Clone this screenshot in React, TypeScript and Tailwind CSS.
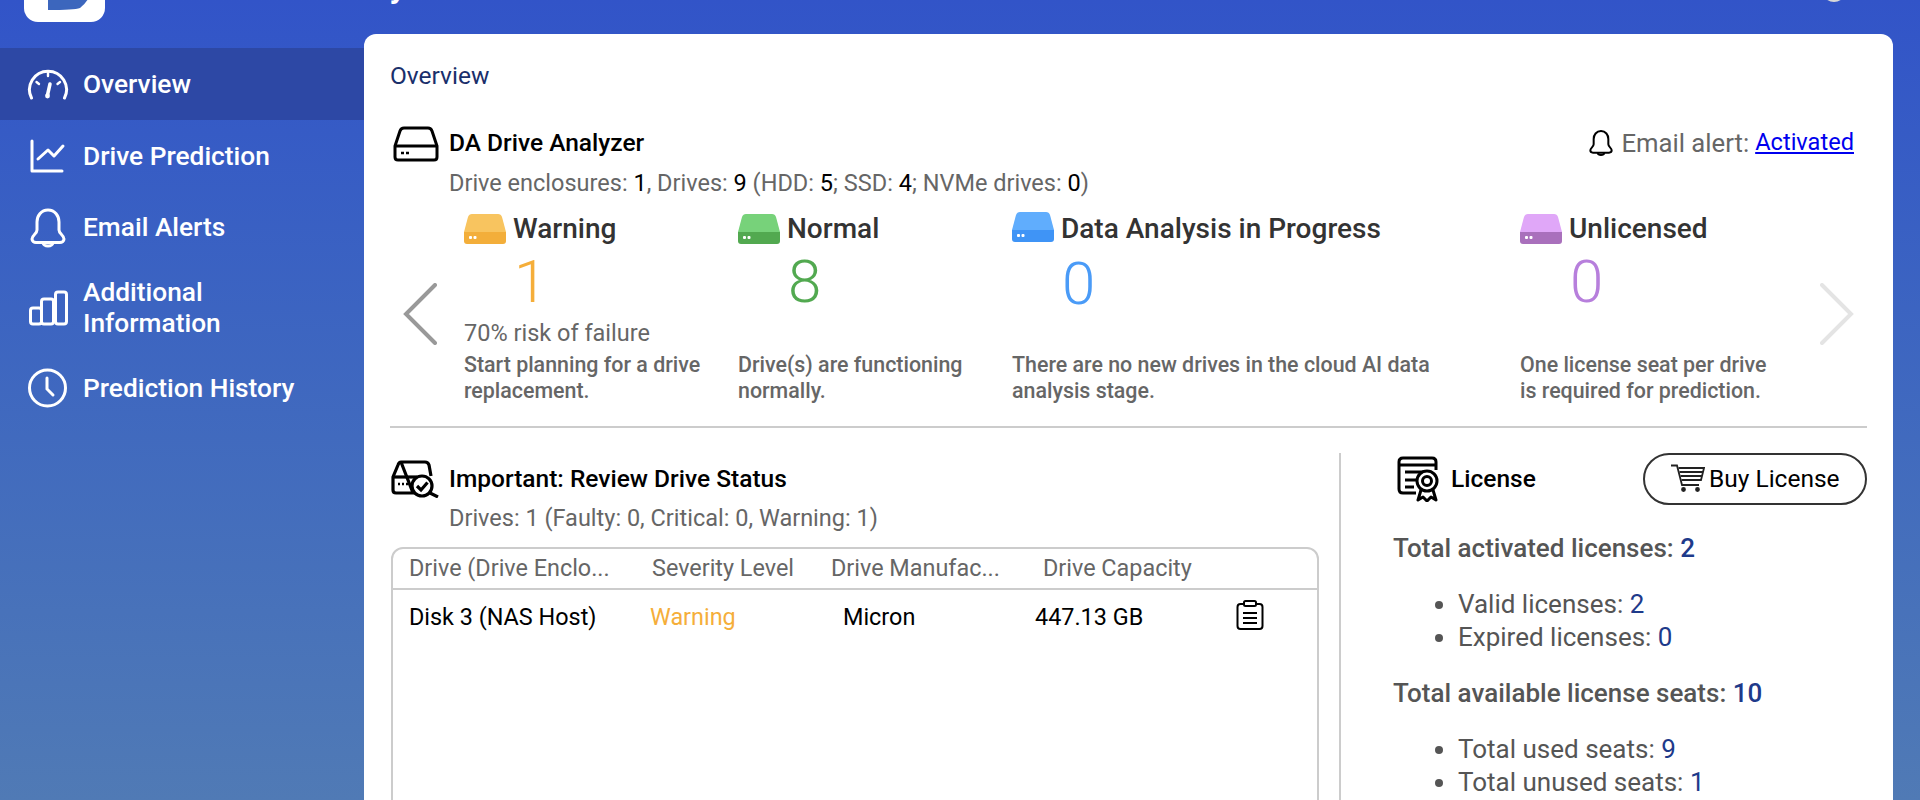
import type { ReactNode } from "react";

const BellIcon = ({ className }: { className: string }) => (
  <svg viewBox="0 0 42 40" fill="none" stroke="currentColor" strokeWidth="3" className={className}>
    <path d="M21 2C14 2 10 8 10 14V22C10 26 5 27 5 31C5 33 7 34.5 9 34.5H33C35 34.5 37 33 37 31C37 27 32 26 32 22V14C32 8 28 2 21 2Z" />
    <path d="M16 35C17 39 25 39 26 35" />
  </svg>
);

const GaugeIcon = () => (
  <svg viewBox="0 0 42 40" fill="none" stroke="currentColor" strokeWidth="3" strokeLinecap="round" className="w-[42px] h-[40px]">
    <path d="M4.5 34A18.5 18.5 0 1 1 37.5 34" />
    <path d="M21 9V12M9.5 18L12 20M33 18L30.5 20" strokeWidth="2.4" />
    <path d="M23 20L20.5 31" strokeWidth="3.5" />
    <circle cx="20.5" cy="32" r="2.4" fill="currentColor" stroke="none" />
  </svg>
);

const ChartIcon = () => (
  <svg viewBox="0 0 42 40" fill="none" stroke="currentColor" strokeWidth="3" strokeLinecap="round" strokeLinejoin="round" className="w-[42px] h-[40px]">
    <path d="M5 5V35H35" />
    <path d="M11 23L21 14L27 20L36 10" />
  </svg>
);

const BarsIcon = () => (
  <svg viewBox="0 0 42 40" fill="none" stroke="currentColor" strokeWidth="3" className="w-[42px] h-[40px]">
    <rect x="3.5" y="20" width="11" height="16" rx="2.5" />
    <rect x="14.5" y="11" width="12" height="25" rx="2.5" />
    <rect x="28.5" y="4" width="11" height="32" rx="2.5" />
  </svg>
);

const ClockIcon = () => (
  <svg viewBox="0 0 42 40" fill="none" stroke="currentColor" strokeWidth="3" strokeLinecap="round" className="w-[42px] h-[40px]">
    <circle cx="20.5" cy="20" r="18" />
    <path d="M20 10V21L26 27" />
  </svg>
);

const DriveIcon = () => (
  <svg viewBox="0 0 46 36" fill="none" stroke="#000" strokeWidth="3" className="w-[46px] h-[36px] shrink-0">
    <path d="M11 2H35Q38 2 39 5L44 20V31Q44 34 41 34H5Q2 34 2 31V20L7 5Q8 2 11 2Z" />
    <path d="M2 20H44" />
    <path d="M8 27H11M13 27H16" strokeWidth="2.5" />
  </svg>
);

const ReviewIcon = () => (
  <svg viewBox="0 0 50 38" fill="none" stroke="#000" strokeWidth="3.2" className="w-[50px] h-[38px] shrink-0">
    <path d="M10 2H34Q37 2 38 5L40 16M22 33H5Q2 33 2 30V17L7 5Q8 2 10 2Z" />
    <path d="M2 17H26" />
    <path d="M7 24H9M11 24H13M15 24H17" strokeWidth="2.6" />
    <circle cx="31" cy="26" r="10" fill="#fff" />
    <path d="M26 26L30 30L36.5 22.5M39 33L47 37" />
  </svg>
);

const LicenseIcon = () => (
  <svg viewBox="0 0 48 46" fill="none" stroke="#000" strokeWidth="3" className="w-[48px] h-[46px] shrink-0">
    <path d="M19 37H6Q2 37 2 33V6Q2 2 6 2H35Q39 2 39 6V14" />
    <path d="M2 9H39M8 16H27M8 24H19M8 31H17" />
    <path d="M24 34L21 44L26 41L30 45L34 41L39 44L36 34" fill="#fff" strokeLinejoin="round" />
    <circle cx="30" cy="25" r="10" fill="#fff" />
    <circle cx="30" cy="25" r="4.5" />
  </svg>
);

const ClipboardIcon = () => (
  <svg viewBox="0 0 28 30" fill="none" stroke="#000" strokeWidth="2" className="w-[28px] h-[30px] -mt-[6px]">
    <rect x="1.5" y="4" width="25" height="25" rx="3" />
    <rect x="8" y="1" width="12" height="5" rx="1.5" fill="#fff" />
    <path d="M7 13H21M7 18H21M7 23H21" />
  </svg>
);

const CartIcon = () => (
  <svg viewBox="0 0 34 28" fill="none" stroke="#222" strokeWidth="1.8" className="w-[34px] h-[28px] shrink-0 -mt-[3px]">
    <path d="M0 1.5H6L11 21H28" />
    <path d="M7.5 4H33L30 16H10.5M8.5 8H31.5M9.5 12H30.5" />
    <circle cx="12.5" cy="25.5" r="1.5" fill="#222" />
    <circle cx="26.5" cy="25.5" r="1.5" fill="#222" />
  </svg>
);

const hddColors = {
  warning: { top: "#f8c45f", bottom: "#f3ae3a" },
  normal: { top: "#77d27a", bottom: "#52a950" },
  progress: { top: "#60adfd", bottom: "#3f94f6" },
  unlicensed: { top: "#e0a7f8", bottom: "#a970bc" },
};

const HddIcon = ({ kind, className }: { kind: keyof typeof hddColors; className: string }) => (
  <svg viewBox="0 0 42 30" className={`w-[42px] h-[30px] shrink-0 ${className}`}>
    <path d="M8 0H34Q37 0 38 3L42 18H0L4 3Q5 0 8 0Z" fill={hddColors[kind].top} />
    <path d="M0 18H42V27Q42 30 39 30H3Q0 30 0 27Z" fill={hddColors[kind].bottom} />
    <rect x="5" y="22" width="3" height="3" rx="1" fill="#fff" />
    <rect x="9.5" y="22" width="3" height="3" rx="1" fill="#fff" />
  </svg>
);

const NavItem = ({ icon, active, children, height }: { icon: ReactNode; active?: boolean; children: ReactNode; height: string }) => (
  <div className={`flex items-center gap-[14px] pl-[27px] text-white text-[26.3px] font-medium leading-[31px] ${height} ${active ? "bg-[#2d48a5]" : ""}`}>
    {icon}
    <span>{children}</span>
  </div>
);

const statuses = [
  {
    kind: "warning" as const,
    title: "Warning",
    count: "1",
    color: "text-[#f5ae3a]",
    risk: "70% risk of failure",
    desc: ["Start planning for a drive", "replacement."],
    width: "w-[274px]",
    iconNudge: "",
    countGap: "mt-[12px]",
    riskGap: "mt-[12px]",
  },
  {
    kind: "normal" as const,
    title: "Normal",
    count: "8",
    color: "text-[#52a950]",
    desc: ["Drive(s) are functioning", "normally."],
    width: "w-[274px]",
    iconNudge: "",
    countGap: "mt-[12px]",
    riskGap: "mt-[12px]",
  },
  {
    kind: "progress" as const,
    title: "Data Analysis in Progress",
    count: "0",
    color: "text-[#4a9bf7]",
    desc: ["There are no new drives in the cloud AI data", "analysis stage."],
    width: "w-[508px]",
    iconNudge: "-mt-[4px]",
    countGap: "mt-[14px]",
    riskGap: "mt-[10px]",
  },
  {
    kind: "unlicensed" as const,
    title: "Unlicensed",
    count: "0",
    color: "text-[#b77fdc]",
    desc: ["One license seat per drive", "is required for prediction."],
    width: "w-[300px]",
    iconNudge: "",
    countGap: "mt-[12px]",
    riskGap: "mt-[12px]",
  },
];

const Val = ({ children }: { children: ReactNode }) => <span className="text-[#1e3a8a]">{children}</span>;
const Blk = ({ children }: { children: ReactNode }) => <span className="text-black">{children}</span>;

export default function App() {
  return (
    <div className="w-[1920px] h-[800px] overflow-hidden flex flex-col bg-linear-to-b from-[#3254c8] to-[#507ab5] font-['Roboto',sans-serif]">
      {/* Header, scrolled mostly out of the picture */}
      <div className="h-[34px] shrink-0 overflow-hidden flex">
        <div className="ml-[24px] -mt-[38px] w-[81px] h-[60px] shrink-0 bg-white rounded-[14px] overflow-hidden">
          <svg viewBox="0 0 81 60" className="w-[81px] h-[60px]">
            <path d="M24 0H72Q72 34 56 46Q50 48 24 48Z" fill="#3c66bd" />
          </svg>
        </div>
        <div className="ml-[65px] -mt-[36px] text-white text-[36px] font-medium leading-[40px] whitespace-nowrap">DA Drive Analyzer</div>
        <div className="ml-auto mr-[74px] -mt-[22px] w-[24px] h-[24px] rounded-full bg-[#d8d8d8]" />
      </div>

      <div className="flex flex-1 min-h-0">
        {/* Sidebar */}
        <div className="w-[364px] shrink-0 pt-[14px]">
          <NavItem active height="h-[72px]" icon={<GaugeIcon />}>Overview</NavItem>
          <NavItem height="h-[72px]" icon={<ChartIcon />}>Drive Prediction</NavItem>
          <NavItem height="h-[71px]" icon={<BellIcon className="w-[42px] h-[40px]" />}>Email Alerts</NavItem>
          <NavItem height="h-[89px]" icon={<BarsIcon />}>
            Additional
            <br />
            Information
          </NavItem>
          <NavItem height="h-[72px]" icon={<ClockIcon />}>Prediction History</NavItem>
        </div>

        {/* Main card */}
        <div className="w-[1529px] shrink-0 h-[800px] bg-white rounded-t-[12px] pl-[26px] pr-[26px] pt-[28px]">
          <div className="text-[24.5px] leading-[28px] text-[#1a2f6b]">Overview</div>

          <div className="mt-[36px] h-[36px] flex items-center">
            <div className="ml-[3px]"><DriveIcon /></div>
            <div className="ml-[10px] -mt-[2px] text-[24.5px] font-medium text-black">DA Drive Analyzer</div>
            <div className="ml-auto mr-[13px] -mt-[2px] flex items-center text-[#666]">
              <BellIcon className="w-[28px] h-[28px] text-black mr-[6px]" />
              <span className="text-[25.7px]">Email alert:</span>
              <a href="#" className="ml-[6px] text-[23.6px] text-[#0000ee] underline">Activated</a>
            </div>
          </div>

          <div className="mt-[7px] ml-[59px] text-[23.5px] leading-[28px] text-[#666]">
            Drive enclosures: <Blk>1</Blk>, Drives: <Blk>9</Blk> (HDD: <Blk>5</Blk>; SSD: <Blk>4</Blk>; NVMe drives: <Blk>0</Blk>)
          </div>

          {/* Status carousel */}
          <div className="mt-[15px] flex items-start">
            <div className="w-[74px] shrink-0 pl-[13px] pt-[71px]">
              <svg viewBox="0 0 34 62" fill="none" stroke="#999" strokeWidth="4" strokeLinecap="round" className="w-[34px] h-[62px]">
                <path d="M32 2L3 31L32 60" />
              </svg>
            </div>
            {statuses.map((s) => (
              <div key={s.title} className={`${s.width} shrink-0`}>
                <div className="h-[33px] flex items-center gap-[7px]">
                  <HddIcon kind={s.kind} className={s.iconNudge} />
                  <span className="text-[28px] font-medium text-[#333]">{s.title}</span>
                </div>
                <div className={`${s.countGap} pl-[50px] text-[60px] font-light leading-[50px] ${s.color}`}>{s.count}</div>
                <div className={`${s.riskGap} h-[28px] text-[23.5px] leading-[28px] text-[#666]`}>{s.risk}</div>
                <div className="mt-[5px] text-[21.4px] font-medium leading-[26px] text-[#666]">
                  {s.desc[0]}
                  <br />
                  {s.desc[1]}
                </div>
              </div>
            ))}
            <div className="ml-auto pt-[71px] mr-[13px]">
              <svg viewBox="0 0 34 62" fill="none" stroke="#e4e4e4" strokeWidth="4" strokeLinecap="round" className="w-[34px] h-[62px]">
                <path d="M2 2L31 31L2 60" />
              </svg>
            </div>
          </div>

          <div className="mt-[22px] h-[2px] bg-[#ccc]" />

          <div className="mt-[25px] flex">
            {/* Review table */}
            <div className="w-[949px] shrink-0 pt-[7px]">
              <div className="flex items-center h-[38px]">
                <div className="ml-[1px]"><ReviewIcon /></div>
                <div className="ml-[8px] text-[24.5px] font-medium text-black">Important: Review Drive Status</div>
              </div>
              <div className="mt-[6px] ml-[59px] text-[23.5px] leading-[28px] text-[#666]">Drives: 1 (Faulty: 0, Critical: 0, Warning: 1)</div>
              <div className="mt-[15px] w-[928px] h-[400px] ml-[1px] border-2 border-[#ccc] rounded-t-[12px] text-[23.4px]">
                <div className="h-[41px] border-b-2 border-[#ccc] flex items-center pl-[16px] text-[#666]">
                  <div className="w-[243px]">Drive (Drive Enclo...</div>
                  <div className="w-[179px]">Severity Level</div>
                  <div className="w-[212px]">Drive Manufac...</div>
                  <div>Drive Capacity</div>
                </div>
                <div className="h-[56px] flex items-center pl-[16px] text-black">
                  <div className="w-[241px]">Disk 3 (NAS Host)</div>
                  <div className="w-[193px] text-[#f5ae3a]">Warning</div>
                  <div className="w-[192px]">Micron</div>
                  <div className="w-[201px]">447.13 GB</div>
                  <ClipboardIcon />
                </div>
              </div>
            </div>

            {/* License */}
            <div className="flex-1 border-l-2 border-[#ccc] pl-[52px] h-[400px]">
              <div className="flex items-center h-[52px]">
                <div className="ml-[4px]"><LicenseIcon /></div>
                <div className="ml-[6px] text-[24.5px] font-medium text-black">License</div>
                <button className="ml-auto w-[224px] h-[52px] rounded-full border-2 border-[#333] flex items-center pl-[26px] gap-[4px] text-[24.5px] text-black">
                  <CartIcon />
                  Buy License
                </button>
              </div>
              <div className="text-[26px] leading-[33px] text-[#555]">
                <div className="mt-[27px] font-medium">Total activated licenses: <Val>2</Val></div>
                <ul className="mt-[23px] pl-[65px] list-disc">
                  <li>Valid licenses: <Val>2</Val></li>
                  <li>Expired licenses: <Val>0</Val></li>
                </ul>
                <div className="mt-[23px] font-medium">Total available license seats: <Val>10</Val></div>
                <ul className="mt-[23px] pl-[65px] list-disc">
                  <li>Total used seats: <Val>9</Val></li>
                  <li>Total unused seats: <Val>1</Val></li>
                </ul>
              </div>
            </div>
          </div>
        </div>
      </div>
    </div>
  );
}
